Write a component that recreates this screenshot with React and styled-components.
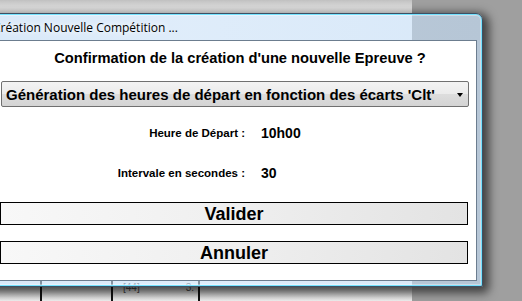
import React from "react";
import styled, { createGlobalStyle } from "styled-components";

const GlobalStyle = createGlobalStyle`
  html, body {
    margin: 0;
    padding: 0;
  }
  body {
    width: 522px;
    height: 301px;
    overflow: hidden;
    font-family: "Liberation Sans", Arial, sans-serif;
    color: #000;
  }
`;

const Screen = styled.div`
  position: relative;
  width: 522px;
  height: 301px;
  overflow: hidden;
  display: flex;
`;

const AppArea = styled.div`
  width: 412px;
  display: flex;
  flex-direction: column;
  background: #fff;
`;

const AppTopStrip = styled.div`
  height: 14px;
  background: linear-gradient(#c0c0c0, #fdfdfd);
`;

const AppBody = styled.div`
  flex: 1;
  background: #fafafa;
`;

const TableRow = styled.div`
  height: 14px;
  display: flex;
  background: linear-gradient(#b4b4b4, #f0f0f0);
`;

const Cell = styled.div`
  width: ${({ w }) => w}px;
  flex: ${({ w }) => (w ? "none" : 1)};
  border-right: ${({ w }) => (w ? "2px solid #111" : "none")};
  font-size: 10px;
  line-height: 10px;
  color: #444;
  display: flex;
  justify-content: ${({ align }) => align || "flex-start"};
  padding: 0 4px 0 10px;
  box-sizing: border-box;
  margin-top: -6px;
  padding-top: 2px;
`;

const Overlay = styled.div`
  flex: 1;
  background: #9f9f9f;
`;

const Window = styled.div`
  position: absolute;
  left: -16px;
  top: 13px;
  width: 499px;
  height: 274px;
  box-sizing: border-box;
  border: 1px solid #3d4f63;
  border-radius: 7px 7px 2px 2px;
  background: linear-gradient(
    to right,
    rgba(196, 222, 248, 0.62) 0%,
    rgba(206, 228, 250, 0.62) 40%,
    rgba(196, 222, 248, 0.62) 100%
  );
  box-shadow: inset 0 0 0 1px rgba(110, 225, 255, 0.95),
    inset 0 0 0 2px rgba(255, 255, 255, 0.35),
    3px 3px 10px 3px rgba(0, 0, 0, 0.6);
  display: flex;
  flex-direction: column;
  padding: 0 5px 5px 5px;
`;

const TitleBar = styled.div`
  height: 26px;
  display: flex;
  align-items: center;
  padding-left: 3px;
  font-family: "Open Sans", "DejaVu Sans", sans-serif;
  font-size: 12px;
  color: #000;
  text-shadow: 0 0 6px #fff, 0 0 10px #fff;
  white-space: nowrap;
`;

const Client = styled.div`
  flex: 1;
  background: #fff;
  border: 1px solid #6c7d8f;
  display: flex;
  flex-direction: column;
`;

const Question = styled.div`
  margin-top: 9px;
  padding-left: 13px;
  text-align: center;
  font-size: 14.7px;
  font-weight: bold;
  line-height: 17px;
  white-space: nowrap;
`;

const Combo = styled.div`
  margin: 14px 7px 0 10px;
  height: 26px;
  box-sizing: border-box;
  border: 1px solid #707070;
  border-radius: 2px;
  background: linear-gradient(#f3f3f3 0%, #ebebeb 50%, #dddddd 51%, #d4d4d4 100%);
  display: flex;
  align-items: center;
  justify-content: space-between;
  padding: 0 5px 0 4px;
  font-size: 15px;
  font-weight: bold;
  white-space: nowrap;
`;

const Arrow = styled.span`
  width: 0;
  height: 0;
  border-left: 3.5px solid transparent;
  border-right: 3.5px solid transparent;
  border-top: 4px solid #000;
  margin-top: 1px;
`;

const Form = styled.div`
  display: grid;
  grid-template-columns: 254px auto;
  column-gap: 16px;
  row-gap: 20px;
  margin-top: 16px;
`;

const Label = styled.div`
  height: 20px;
  display: flex;
  align-items: center;
  justify-content: flex-end;
  font-size: 11.5px;
  font-weight: bold;
  white-space: nowrap;
`;

const Value = styled.div`
  height: 20px;
  display: flex;
  align-items: center;
  font-size: 14px;
  font-weight: bold;
`;

const Button = styled.div`
  margin: ${({ first }) => (first ? "19px" : "16px")} 8px 0 9px;
  height: 23px;
  box-sizing: border-box;
  border: 1px solid #000;
  background: linear-gradient(to right, #f8f8f8 0%, #f0f0f0 45%, #e3e3e3 100%);
  display: flex;
  align-items: center;
  justify-content: center;
  font-size: 18px;
  font-weight: bold;
  line-height: 20px;
`;

export default function App() {
  return (
    <>
      <GlobalStyle />
      <Screen>
        <AppArea>
          <AppTopStrip />
          <AppBody />
          <TableRow>
            <Cell w={42} />
            <Cell w={71} />
            <Cell w={87} align="space-between">
              <span>[44]</span>
              <span>3.</span>
            </Cell>
            <Cell />
          </TableRow>
        </AppArea>
        <Overlay />
        <Window>
          <TitleBar>Création Nouvelle Compétition ...</TitleBar>
          <Client>
            <Question>Confirmation de la création d'une nouvelle Epreuve ?</Question>
            <Combo>
              <span>Génération des heures de départ en fonction des écarts 'Clt'</span>
              <Arrow />
            </Combo>
            <Form>
              <Label>Heure de Départ :</Label>
              <Value>10h00</Value>
              <Label>Intervale en secondes :</Label>
              <Value>30</Value>
            </Form>
            <Button first>Valider</Button>
            <Button>Annuler</Button>
          </Client>
        </Window>
      </Screen>
    </>
  );
}
